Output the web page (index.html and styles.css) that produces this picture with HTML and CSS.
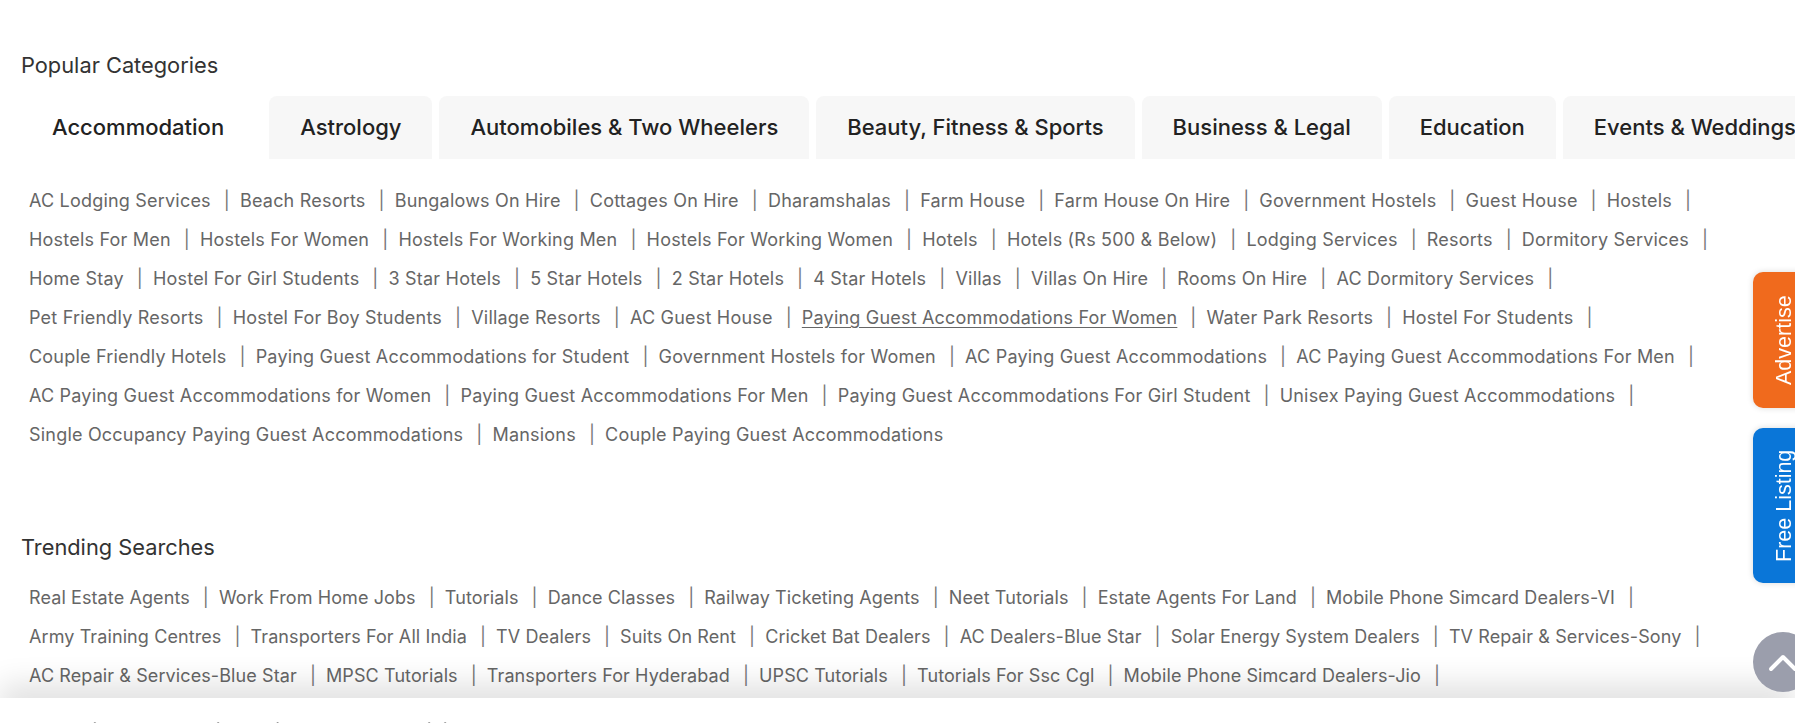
FILE: index.html
```html
<!DOCTYPE html>
<html lang="en">
<head>
    <meta charset="UTF-8">
    <meta name="viewport" content="width=device-width, initial-scale=1.0">
    <title>Popular Categories</title>
    <link rel="stylesheet" href="styles.css">
</head>
<body>
    <div class="section">
        <h2>Popular Categories</h2>
        <div class="tabs">
            <div class="tab active">Accommodation</div>
            <div class="tab">Astrology</div>
            <div class="tab">Automobiles &amp; Two Wheelers</div>
            <div class="tab">Beauty, Fitness &amp; Sports</div>
            <div class="tab">Business &amp; Legal</div>
            <div class="tab">Education</div>
            <div class="tab">Events &amp; Weddings</div>
        </div>
        <div class="links">
            <div class="row">
                <a href="#">AC Lodging Services</a><span class="sep">|</span>
                <a href="#">Beach Resorts</a><span class="sep">|</span>
                <a href="#">Bungalows On Hire</a><span class="sep">|</span>
                <a href="#">Cottages On Hire</a><span class="sep">|</span>
                <a href="#">Dharamshalas</a><span class="sep">|</span>
                <a href="#">Farm House</a><span class="sep">|</span>
                <a href="#">Farm House On Hire</a><span class="sep">|</span>
                <a href="#">Government Hostels</a><span class="sep">|</span>
                <a href="#">Guest House</a><span class="sep">|</span>
                <a href="#">Hostels</a><span class="sep">|</span>
            </div>
            <div class="row">
                <a href="#">Hostels For Men</a><span class="sep">|</span>
                <a href="#">Hostels For Women</a><span class="sep">|</span>
                <a href="#">Hostels For Working Men</a><span class="sep">|</span>
                <a href="#">Hostels For Working Women</a><span class="sep">|</span>
                <a href="#">Hotels</a><span class="sep">|</span>
                <a href="#">Hotels (Rs 500 &amp; Below)</a><span class="sep">|</span>
                <a href="#">Lodging Services</a><span class="sep">|</span>
                <a href="#">Resorts</a><span class="sep">|</span>
                <a href="#">Dormitory Services</a><span class="sep">|</span>
            </div>
            <div class="row">
                <a href="#">Home Stay</a><span class="sep">|</span>
                <a href="#">Hostel For Girl Students</a><span class="sep">|</span>
                <a href="#">3 Star Hotels</a><span class="sep">|</span>
                <a href="#">5 Star Hotels</a><span class="sep">|</span>
                <a href="#">2 Star Hotels</a><span class="sep">|</span>
                <a href="#">4 Star Hotels</a><span class="sep">|</span>
                <a href="#">Villas</a><span class="sep">|</span>
                <a href="#">Villas On Hire</a><span class="sep">|</span>
                <a href="#">Rooms On Hire</a><span class="sep">|</span>
                <a href="#">AC Dormitory Services</a><span class="sep">|</span>
            </div>
            <div class="row">
                <a href="#">Pet Friendly Resorts</a><span class="sep">|</span>
                <a href="#">Hostel For Boy Students</a><span class="sep">|</span>
                <a href="#">Village Resorts</a><span class="sep">|</span>
                <a href="#">AC Guest House</a><span class="sep">|</span>
                <a href="#" class="hover">Paying Guest Accommodations For Women</a><span class="sep">|</span>
                <a href="#">Water Park Resorts</a><span class="sep">|</span>
                <a href="#">Hostel For Students</a><span class="sep">|</span>
            </div>
            <div class="row">
                <a href="#">Couple Friendly Hotels</a><span class="sep">|</span>
                <a href="#">Paying Guest Accommodations for Student</a><span class="sep">|</span>
                <a href="#">Government Hostels for Women</a><span class="sep">|</span>
                <a href="#">AC Paying Guest Accommodations</a><span class="sep">|</span>
                <a href="#">AC Paying Guest Accommodations For Men</a><span class="sep">|</span>
            </div>
            <div class="row">
                <a href="#">AC Paying Guest Accommodations for Women</a><span class="sep">|</span>
                <a href="#">Paying Guest Accommodations For Men</a><span class="sep">|</span>
                <a href="#">Paying Guest Accommodations For Girl Student</a><span class="sep">|</span>
                <a href="#">Unisex Paying Guest Accommodations</a><span class="sep">|</span>
            </div>
            <div class="row">
                <a href="#">Single Occupancy Paying Guest Accommodations</a><span class="sep">|</span>
                <a href="#">Mansions</a><span class="sep">|</span>
                <a href="#">Couple Paying Guest Accommodations</a>
            </div>
        </div>

        <h2 class="trending-title">Trending Searches</h2>
        <div class="links trending">
            <div class="row">
                <a href="#">Real Estate Agents</a><span class="sep">|</span>
                <a href="#">Work From Home Jobs</a><span class="sep">|</span>
                <a href="#">Tutorials</a><span class="sep">|</span>
                <a href="#">Dance Classes</a><span class="sep">|</span>
                <a href="#">Railway Ticketing Agents</a><span class="sep">|</span>
                <a href="#">Neet Tutorials</a><span class="sep">|</span>
                <a href="#">Estate Agents For Land</a><span class="sep">|</span>
                <a href="#">Mobile Phone Simcard Dealers-VI</a><span class="sep">|</span>
            </div>
            <div class="row">
                <a href="#">Army Training Centres</a><span class="sep">|</span>
                <a href="#">Transporters For All India</a><span class="sep">|</span>
                <a href="#">TV Dealers</a><span class="sep">|</span>
                <a href="#">Suits On Rent</a><span class="sep">|</span>
                <a href="#">Cricket Bat Dealers</a><span class="sep">|</span>
                <a href="#">AC Dealers-Blue Star</a><span class="sep">|</span>
                <a href="#">Solar Energy System Dealers</a><span class="sep">|</span>
                <a href="#">TV Repair &amp; Services-Sony</a><span class="sep">|</span>
            </div>
            <div class="row">
                <a href="#">AC Repair &amp; Services-Blue Star</a><span class="sep">|</span>
                <a href="#">MPSC Tutorials</a><span class="sep">|</span>
                <a href="#">Transporters For Hyderabad</a><span class="sep">|</span>
                <a href="#">UPSC Tutorials</a><span class="sep">|</span>
                <a href="#">Tutorials For Ssc Cgl</a><span class="sep">|</span>
                <a href="#">Mobile Phone Simcard Dealers-Jio</a><span class="sep">|</span>
            </div>
        </div>
    </div>

    <div class="bottom-bar">
        <h3>Justdial Collections in Popular Cities</h3>
    </div>

    <a href="#" class="side-btn advertise">Advertise</a>
    <a href="#" class="side-btn free-listing">Free Listing</a>
    <a href="#" class="scroll-top">
        <svg width="30" height="20" viewBox="0 0 30 20"><path d="M3 17 L15 5 L27 17" fill="none" stroke="#fff" stroke-width="4" stroke-linecap="round" stroke-linejoin="round"/></svg>
    </a>
</body>
</html>
```

FILE: styles.css
```css
body {
    font-family: 'Inter', sans-serif;
    margin: 0;
    padding: 0;
    background: #fff;
    color: #333;
    overflow: hidden;
}
.section {
    padding: 51px 0 0 21px;
}
h2 {
    font-size: 21.8px;
    font-weight: 400;
    line-height: 28px;
    margin: 0;
    color: #333;
}
.tabs {
    display: flex;
    gap: 7px;
    margin-top: 17px;
    white-space: nowrap;
}
.tab {
    height: 63px;
    line-height: 63px;
    padding: 0 31px;
    background: #f7f7f7;
    border-radius: 8px 8px 0 0;
    font-size: 22px;
    font-weight: 500;
    color: #222;
    flex-shrink: 0;
}
.tab.active {
    background: #fff;
    padding: 0 38px 0 31px;
}
.links {
    padding: 22px 0 0 8px;
}
.row {
    display: flex;
    align-items: center;
    height: 39px;
    white-space: nowrap;
    font-size: 18px;
    letter-spacing: 0.2px;
}
.row a {
    color: #666;
    text-decoration: none;
}
.row a.hover {
    text-decoration: underline;
    text-underline-offset: 3px;
}
.sep {
    color: #777;
    margin: 0 10px 0 13px;
}
.trending-title {
    margin-top: 79px;
}
.links.trending {
    padding-top: 17px;
}
.trending .row {
    letter-spacing: 0.1px;
}
.bottom-bar {
    position: fixed;
    left: 0;
    right: 0;
    top: 698px;
    height: 40px;
    background: #fff;
    box-shadow: 0 -14px 30px rgba(0, 0, 0, 0.12);
    padding-left: 21px;
}
.bottom-bar h3 {
    margin: 20px 0 0;
    font-size: 26px;
    font-weight: 600;
    color: #111;
}
.side-btn {
    position: fixed;
    right: -20px;
    width: 62px;
    display: flex;
    align-items: center;
    justify-content: center;
    color: #fff;
    text-decoration: none;
    font-family: 'Liberation Sans', sans-serif;
    font-size: 21.5px;
    writing-mode: vertical-rl;
    transform: rotate(180deg);
    border-radius: 0 10px 10px 0;
    box-shadow: 0 0 6px rgba(0, 0, 0, 0.15);
}
.advertise {
    top: 272px;
    height: 136px;
    background: #f06a1d;
}
.free-listing {
    top: 428px;
    height: 155px;
    background: #0a76d8;
}
.scroll-top {
    position: fixed;
    top: 632px;
    right: -18px;
    width: 60px;
    height: 60px;
    border-radius: 50%;
    background: #9b9eac;
    display: flex;
    align-items: center;
    justify-content: center;
}
```
